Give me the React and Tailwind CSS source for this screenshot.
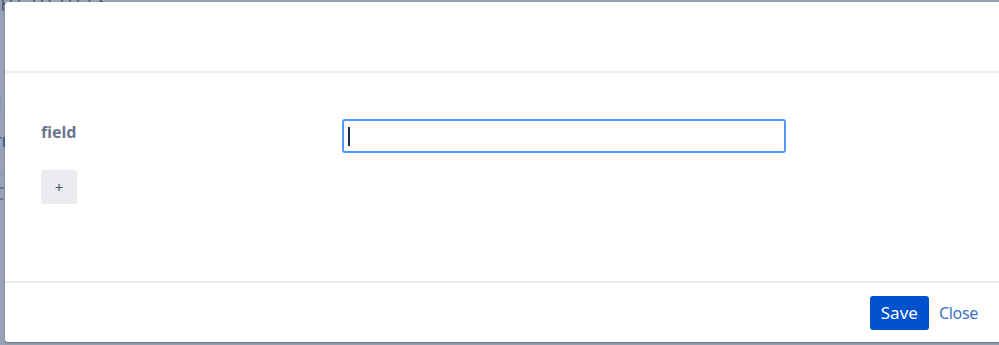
import React from "react";

const font = { fontFamily: '"Noto Sans", "Open Sans", Arial, sans-serif' };

function Backdrop() {
  // page behind the dialog, dimmed by the overlay
  return (
    <div className="absolute inset-0 bg-[#f4f5f7] text-[#172b4d]">
      <div className="-mt-[14px] text-[22px] tracking-[3px] font-light">REPORTS</div>
      <div className="mt-[62px] flex flex-col text-[18px] text-[#0052cc]">
        <div className="-ml-[8px] h-[38px] border-b border-[#dfe1e6] pt-[8px]">li</div>
        <div className="-ml-[6px] h-[40px] border-b border-[#dfe1e6] pt-[8px]">rr</div>
        <div className="-ml-[7px] pt-[8px] text-[#6b778c] text-[14px] leading-4">e</div>
        <div className="-ml-[7px] text-[#6b778c] text-[18px] leading-5">C</div>
      </div>
      <div className="absolute inset-0 bg-[#4f5e80]/55" />
    </div>
  );
}

export default function App() {
  return (
    <div className="relative w-[999px] h-[345px] overflow-hidden" style={font}>
      <Backdrop />
      <div className="absolute left-[5px] top-[2px] w-[1000px] h-[340px] bg-white rounded-[3px] flex flex-col shadow-[0_1px_2px_rgba(9,30,66,0.4)]">
        <div className="h-[71px] shrink-0 border-b-2 border-[#ebecf0]" />
        <div className="flex-1 px-[36px] pt-[46px] border-b-2 border-[#ebecf0]">
          <div className="flex items-start">
            <label className="w-[301px] pt-[1px] text-[16px] font-bold text-[#6b778c]">field</label>
            <div className="w-[444px] h-[34px] rounded-[3px] border-2 border-[#4c9aff] flex items-center pl-[4px]">
              <div className="w-[2px] h-[19px] bg-[#172b4d]" />
            </div>
          </div>
          <button className="mt-[17px] w-[36px] h-[34px] rounded-[3px] bg-[#ebecf0] text-[#42526e] text-[15px] flex items-center justify-center">
            +
          </button>
        </div>
        <div className="h-[59px] shrink-0 flex items-center justify-end pr-[27px] gap-[10px]">
          <button className="h-[34px] px-[11px] rounded-[3px] bg-[#0052cc] text-white text-[17px]">Save</button>
          <button className="text-[16px] text-[#3b73c0] tracking-[-0.3px]">Close</button>
        </div>
      </div>
    </div>
  );
}
